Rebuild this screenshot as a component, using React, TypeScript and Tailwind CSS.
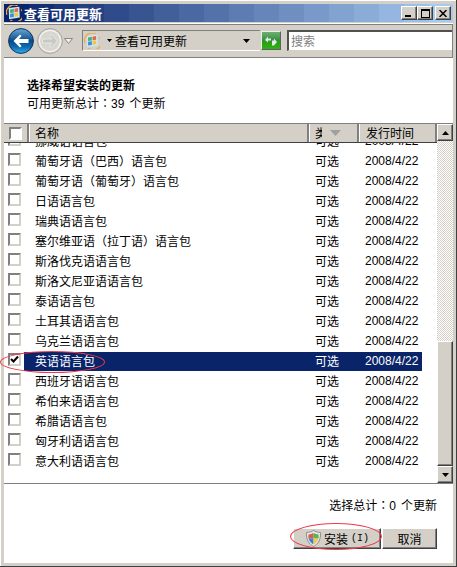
const rows = [
  "挪威语语言包",
  "葡萄牙语（巴西）语言包",
  "葡萄牙语（葡萄牙）语言包",
  "日语语言包",
  "瑞典语语言包",
  "塞尔维亚语（拉丁语）语言包",
  "斯洛伐克语语言包",
  "斯洛文尼亚语语言包",
  "泰语语言包",
  "土耳其语语言包",
  "乌克兰语语言包",
  "英语语言包",
  "西班牙语语言包",
  "希伯来语语言包",
  "希腊语语言包",
  "匈牙利语语言包",
  "意大利语语言包",
];

const raised =
  "border border-t-white border-l-white border-r-[#404040] border-b-[#404040] bg-[#d4d0c8] shadow-[inset_-1px_-1px_0_#808080]";

// the classic caption gradient comes out in visible 25px bands
function bandedGradient() {
  const from = [10, 36, 106];
  const to = [166, 202, 240];
  const count = 18;
  const stops: string[] = [];
  for (let i = 0; i < count; i++) {
    const t = i / (count - 1);
    const c = from.map((f, k) => Math.round(f + (to[k] - f) * t)).join(",");
    stops.push(`rgb(${c}) ${i * 25}px ${(i + 1) * 25}px`);
  }
  return `linear-gradient(90deg, ${stops.join(", ")})`;
}

function WinLogo({ size }: { size: number }) {
  return (
    <svg width={size} height={size} viewBox="0 0 18 18" className="shrink-0">
      <path d="M3 3.5 L15 2 L15.5 14 L3.5 16 Z" fill="#cfe6f2" />
      <path d="M1 11 A8.5 8.5 0 0 1 13 0.8" fill="none" stroke="#f0aa40" strokeWidth="1.5" />
      <path d="M5 16.8 A8.5 8.5 0 0 0 17.2 5" fill="none" stroke="#f0aa40" strokeWidth="1.5" />
      <path d="M4.6 5 L8.8 4.3 L8.8 8.4 L4.6 9 Z" fill="#48b070" />
      <path d="M9.6 4.2 L13.6 3.5 L13.6 7.6 L9.6 8.2 Z" fill="#e0684e" />
      <path d="M4.6 9.8 L8.8 9.2 L8.8 13.4 L4.6 14 Z" fill="#3f8cd8" />
      <path d="M9.6 9 L13.6 8.4 L13.6 12.6 L9.6 13.2 Z" fill="#f0c840" />
    </svg>
  );
}

function NavButton({ active }: { active?: boolean }) {
  return (
    <svg width="26" height="26" viewBox="0 0 26 26">
      <defs>
        <linearGradient id="backFill" x1="0" y1="0" x2="0" y2="1">
          <stop offset="0" stopColor="#6aa8d4" />
          <stop offset="0.5" stopColor="#0b4a88" />
          <stop offset="0.75" stopColor="#0f6cb4" />
          <stop offset="1" stopColor="#38b0ea" />
        </linearGradient>
      </defs>
      <circle
        cx="13"
        cy="13"
        r="12.4"
        fill={active ? "url(#backFill)" : "#e4e2dc"}
        stroke={active ? "#0a3560" : "#a0a09c"}
      />
      {!active && <circle cx="13" cy="13" r="10.5" fill="#d8d6d0" stroke="#f8f8f6" />}
      {active ? (
        <path d="M5.5 13 L12 6.5 L13.5 8 L11 11 L20.5 11 L20.5 15 L11 15 L13.5 18 L12 19.5 Z" fill="#ffffff" />
      ) : (
        <path d="M20.5 13 L14 6.5 L12.5 8 L15 11 L5.5 11 L5.5 15 L15 15 L12.5 18 L14 19.5 Z" fill="#c8c8c4" stroke="#f0f0ee" strokeWidth="0.7" />
      )}
    </svg>
  );
}

function Shield() {
  return (
    <svg width="15" height="17" viewBox="0 0 15 17" className="shrink-0">
      <path d="M7.5 0.5 C9.5 1.8 11.8 2.4 14.5 2.5 C15 9 12.5 14 7.5 16.5 C2.5 14 0 9 0.5 2.5 C3.2 2.4 5.5 1.8 7.5 0.5 Z" fill="#e8e8e6" stroke="#8a8e90" />
      <path d="M7.5 3 L7.5 8.5 L2.5 8.5 C2.3 7 2.3 5.5 2.5 4.4 C4.3 4.3 6 3.8 7.5 3 Z" fill="#e05a48" />
      <path d="M7.5 3 C9 3.8 10.7 4.3 12.5 4.4 C12.7 5.5 12.7 7 12.5 8.5 L7.5 8.5 Z" fill="#58b458" />
      <path d="M2.5 8.5 L7.5 8.5 L7.5 14.5 C5 13 3.3 11 2.5 8.5 Z" fill="#3a82d8" />
      <path d="M7.5 8.5 L12.5 8.5 C11.7 11 10 13 7.5 14.5 Z" fill="#f0cc40" />
    </svg>
  );
}

function CheckBox({ checked }: { checked?: boolean }) {
  return (
    <div className="w-[13px] h-[13px] shrink-0 bg-white border-2 border-t-[#808080] border-l-[#808080] border-r-[#d4d0c8] border-b-[#d4d0c8] flex items-center justify-center">
      {checked && (
        <svg width="9" height="9" viewBox="0 0 9 9">
          <path d="M1 4 L3.5 6.5 L8 1.5" fill="none" stroke="#000" strokeWidth="2" />
        </svg>
      )}
    </div>
  );
}

function Arrow({ up }: { up?: boolean }) {
  return (
    <div className={`w-4 h-[17px] shrink-0 flex items-center justify-center ${raised}`}>
      <svg width="7" height="4" viewBox="0 0 7 4">
        <path d={up ? "M3.5 0 L7 4 L0 4 Z" : "M0 0 L7 0 L3.5 4 Z"} fill="#000" />
      </svg>
    </div>
  );
}

export default function App() {
  return (
    <div className="relative w-[457px] h-[567px] overflow-hidden bg-[#d4d0c8] p-[4px] flex flex-col text-[12px] text-black font-['Noto_Sans_CJK_SC','Liberation_Sans',sans-serif] shadow-[inset_-1px_-1px_0_#404040,inset_1px_1px_0_#ffffff]">
      {/* Title bar */}
      <div className="h-[18px] shrink-0 flex items-center" style={{ background: bandedGradient() }}>
        <div className="ml-[2px]">
          <WinLogo size={16} />
        </div>
        <span className="ml-[2px] text-white text-[13px] font-bold leading-none">查看可用更新</span>
        <div className="ml-auto mr-[2px] flex">
          <div className={`w-4 h-[14px] flex items-end justify-center pb-[2px] ${raised}`}>
            <div className="w-[6px] h-[2px] bg-black mr-[2px]" />
          </div>
          <div className={`w-4 h-[14px] flex items-center justify-center ${raised}`}>
            <div className="w-[9px] h-[9px] border border-t-2 border-black" />
          </div>
          <div className={`w-4 h-[14px] ml-[2px] flex items-center justify-center ${raised}`}>
            <svg width="8" height="7" viewBox="0 0 8 7">
              <path d="M0.5 0 L7.5 7 M7.5 0 L0.5 7" stroke="#000" strokeWidth="1.5" />
            </svg>
          </div>
        </div>
      </div>

      {/* Toolbar */}
      <div className="mt-[1px] h-[35px] shrink-0 flex items-center border-t border-t-white border-b border-b-[#808080] shadow-[inset_-1px_1px_0_#808080] bg-[#d4d0c8]">
        <div className="ml-[4px] flex items-center">
          <NavButton active />
          <div className="ml-[3px]">
            <NavButton />
          </div>
          <svg width="9" height="6" viewBox="0 0 9 6" className="ml-[1px]">
            <path d="M0.5 0.5 L8.5 0.5 L4.5 5.5 Z" fill="#f0efec" stroke="#8a8a8a" />
          </svg>
        </div>
        <div className="ml-[9px] w-[178px] h-[21px] flex items-center border-t border-l border-t-[#808080] border-l-[#808080] border-b border-b-white">
          <div className="ml-[1px]">
            <WinLogo size={16} />
          </div>
          <svg width="5" height="3" viewBox="0 0 5 3" className="ml-[7px]">
            <path d="M0 0 L5 0 L2.5 3 Z" fill="#000" />
          </svg>
          <span className="ml-[3px] leading-none">查看可用更新</span>
          <svg width="7" height="4" viewBox="0 0 7 4" className="ml-auto mr-[10px]">
            <path d="M0 0 L7 0 L3.5 4 Z" fill="#000" />
          </svg>
        </div>
        <div className="ml-[1px] w-5 h-[19px] border border-t-[#e8f0e8] border-l-[#e8f0e8] border-r-[#606060] border-b-[#606060] bg-[linear-gradient(180deg,#6fb06f_0%,#2f8a3f_55%,#25a010_56%,#30b018_100%)] flex items-center justify-center">
          <svg width="14" height="12" viewBox="0 0 14 12">
            <path d="M1 5 L4 1.5 L4 3.5 L7 3.5 L7 5.5 L4 5.5 L4 7.5 Z" fill="#e8e8e8" />
            <path d="M13 7 L10 3.5 L10 5.5 L8 5.5 L8 10.5 L10 10.5 Z" fill="#e8e8e8" />
          </svg>
        </div>
        <div className="ml-[6px] flex-1 mr-[1px] h-[21px] bg-white border-t-2 border-l-2 border-t-[#505050] border-l-[#505050] border-b border-b-[#d4d0c8] flex items-center">
          <span className="ml-[2px] text-[#808080] leading-none">搜索</span>
        </div>
      </div>

      {/* Content */}
      <div className="flex-1 min-h-0 bg-white flex flex-col">
        <div className="h-[65px] shrink-0 pl-[23px] pt-[18px]">
          <div className="font-bold leading-[18px]">选择希望安装的更新</div>
          <div className="leading-[18px]">
            可用更新总计<span className="font-['Noto_Sans_CJK_TC',sans-serif]">：</span>
            <span className="font-['Liberation_Sans',sans-serif] mr-[5px]">39</span>个更新
          </div>
        </div>

        <div className="h-[361px] shrink-0 flex border-t border-t-[#808080] border-b border-b-[#808080]">
          <div className="flex-1 min-w-0 flex flex-col">
            {/* Header */}
            <div className="h-[19px] shrink-0 flex bg-[#d4d0c8] border-b border-b-[#404040]">
              <div className="w-[25px] flex items-center pl-[5px] border-r-2 border-r-[#808080]">
                <div className="w-[13px] h-[13px] bg-white border-2 border-t-[#808080] border-l-[#808080] border-r-white border-b-white" />
              </div>
              <div className="w-[280px] pl-[5px] flex items-center border-r-2 border-r-[#808080] border-l border-l-white">
                名称
              </div>
              <div className="w-[50px] pl-[5px] flex items-center border-r-2 border-r-[#808080] border-l border-l-white overflow-hidden">
                <span className="w-[7px] overflow-hidden whitespace-nowrap">类型</span>
                <svg width="11" height="6" viewBox="0 0 11 6" className="ml-[8px] shrink-0">
                  <path d="M0 0 L11 0 L5.5 6 Z" fill="#a0a0a0" />
                </svg>
              </div>
              <div className="flex-1 pl-[6px] flex items-center border-l border-l-white border-r-2 border-r-[#808080]">
                发行时间
              </div>
            </div>

            {/* Rows, scrolled so the first is clipped by the header */}
            <div className="flex-1 min-h-0 overflow-hidden">
              <div className="-mt-[11px]">
                {rows.map((name, i) => {
                  const selected = name === "英语语言包";
                  return (
                    <div key={i} className="h-5 flex items-start">
                      <div className="w-5 shrink-0 pl-[4px] pt-[1px]">
                        <CheckBox checked={selected} />
                      </div>
                      <div
                        className={`w-[398px] h-[19px] flex items-center pb-[1px] leading-none ${
                          selected ? "bg-[#0a246a] text-white" : ""
                        }`}
                      >
                        <div className="w-[291px] pl-[11px] whitespace-nowrap">{name}</div>
                        <div className="w-[50px]">可选</div>
                        <div className="font-['Liberation_Sans',sans-serif]">2008/4/22</div>
                      </div>
                    </div>
                  );
                })}
              </div>
            </div>
          </div>

          {/* Scrollbar */}
          <div className="w-4 shrink-0 flex flex-col bg-[repeating-conic-gradient(#d4d0c8_0%_25%,#ffffff_0%_50%)] bg-[length:2px_2px]">
            <Arrow up />
            <div className="flex-1" />
            <div className={`h-[125px] w-4 shrink-0 ${raised}`} />
            <Arrow />
          </div>
        </div>

        {/* Footer */}
        <div className="flex-1 min-h-0 flex flex-col items-end pr-[16px]">
          <div className="mt-[12px] leading-[18px]">
            选择总计<span className="font-['Noto_Sans_CJK_TC',sans-serif]">：</span>
            <span className="font-['Liberation_Sans',sans-serif] mr-[5px]">0</span>个更新
          </div>
          <div className="mt-[13px] flex gap-[1px]">
            <div className={`w-[88px] h-[21px] flex items-center pl-[12px] ${raised}`}>
              <Shield />
              <span className="ml-[3px] leading-none">安装</span>
              <span className="ml-[3px] leading-none text-[10px] font-['Liberation_Mono',monospace]">(I)</span>
            </div>
            <div className={`w-[55px] h-[21px] flex items-center justify-center leading-none ${raised}`}>取消</div>
          </div>
        </div>
      </div>

      {/* Red annotation ellipses */}
      <div className="absolute left-0 top-[351px] w-[105px] h-[22px] rounded-[50%] border border-[#f03a48]" />
      <div className="absolute left-[290px] top-[523px] w-[92px] h-[27px] rounded-[50%] border border-[#f03a48]" />
    </div>
  );
}
